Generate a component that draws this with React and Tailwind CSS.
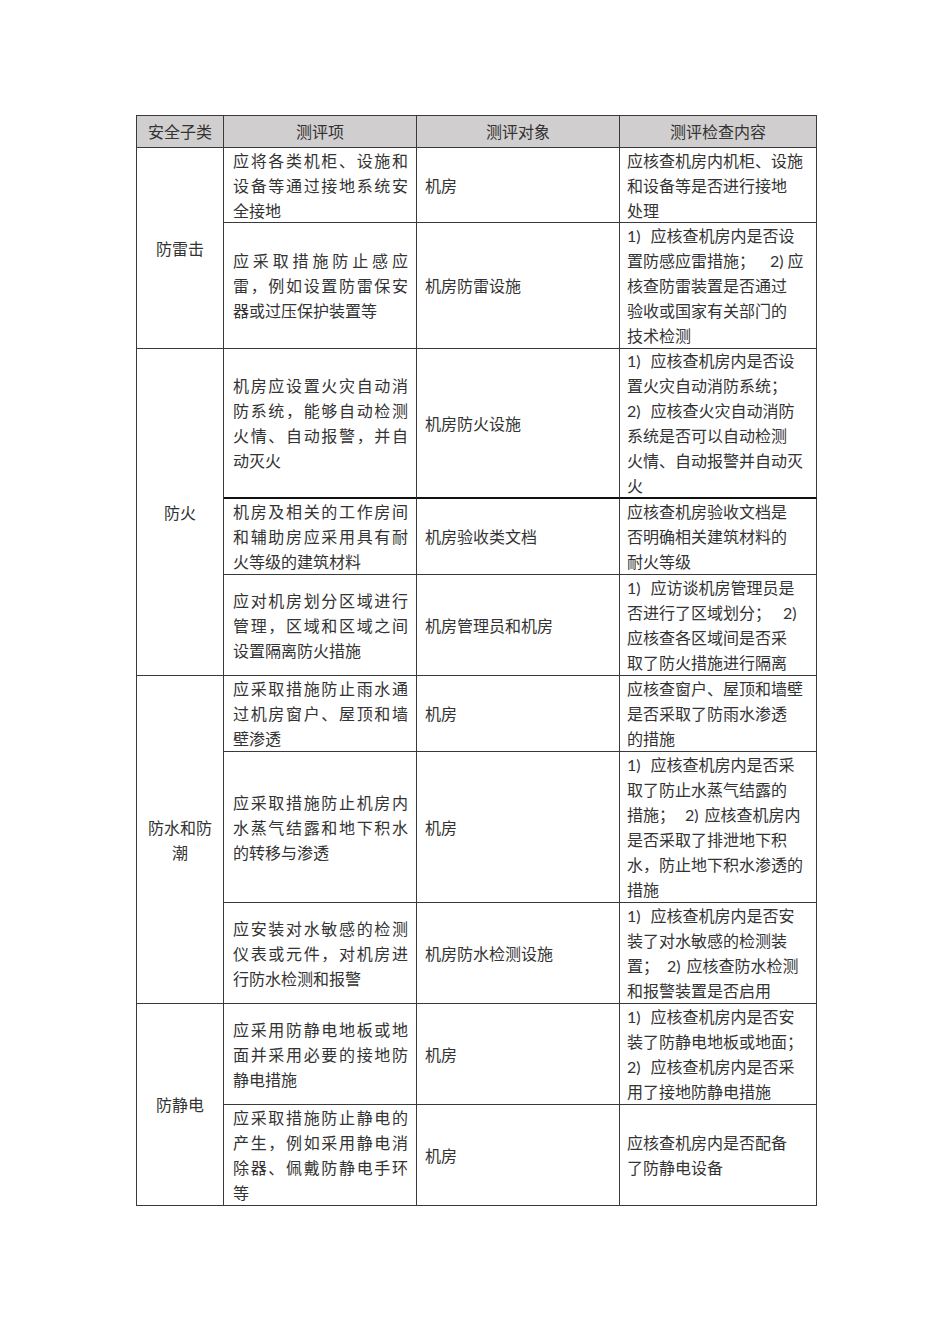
const groups = [
  {
    name: ['防雷击'],
    rows: [
      {
        h: 'h-[75px]',
        item: ['应将各类机柜、设施和', '设备等通过接地系统安', '全接地'],
        obj: '机房',
        check: ['应核查机房内机柜、设施', '和设备等是否进行接地', '处理'],
      },
      {
        h: 'h-[126px]',
        item: ['应采取措施防止感应', '雷，例如设置防雷保安', '器或过压保护装置等'],
        obj: '机房防雷设施',
        check: ['1)~10~应核查机房内是否设', '置防感应雷措施；~15~2)~4~应', '核查防雷装置是否通过', '验收或国家有关部门的', '技术检测'],
      },
    ],
  },
  {
    name: ['防火'],
    rows: [
      {
        h: 'h-[150px]',
        thick: true,
        item: ['机房应设置火灾自动消', '防系统，能够自动检测', '火情、自动报警，并自', '动灭火'],
        obj: '机房防火设施',
        check: ['1)~10~应核查机房内是否设', '置火灾自动消防系统；', '2)~10~应核查火灾自动消防', '系统是否可以自动检测', '火情、自动报警并自动灭', '火'],
      },
      {
        h: 'h-[76px]',
        item: ['机房及相关的工作房间', '和辅助房应采用具有耐', '火等级的建筑材料'],
        obj: '机房验收类文档',
        check: ['应核查机房验收文档是', '否明确相关建筑材料的', '耐火等级'],
      },
      {
        h: 'h-[101px]',
        item: ['应对机房划分区域进行', '管理，区域和区域之间', '设置隔离防火措施'],
        obj: '机房管理员和机房',
        check: ['1)~10~应访谈机房管理员是', '否进行了区域划分；~12~2)', '应核查各区域间是否采', '取了防火措施进行隔离'],
      },
    ],
  },
  {
    name: ['防水和防', '潮'],
    rows: [
      {
        h: 'h-[76px]',
        item: ['应采取措施防止雨水通', '过机房窗户、屋顶和墙', '壁渗透'],
        obj: '机房',
        check: ['应核查窗户、屋顶和墙壁', '是否采取了防雨水渗透', '的措施'],
      },
      {
        h: 'h-[151px]',
        item: ['应采取措施防止机房内', '水蒸气结露和地下积水', '的转移与渗透'],
        obj: '机房',
        check: ['1)~10~应核查机房内是否采', '取了防止水蒸气结露的', '措施；~10~2)~6~应核查机房内', '是否采取了排泄地下积', '水，防止地下积水渗透的', '措施'],
      },
      {
        h: 'h-[101px]',
        item: ['应安装对水敏感的检测', '仪表或元件，对机房进', '行防水检测和报警'],
        obj: '机房防水检测设施',
        check: ['1)~10~应核查机房内是否安', '装了对水敏感的检测装', '置；~8~2)~6~应核查防水检测', '和报警装置是否启用'],
      },
    ],
  },
  {
    name: ['防静电'],
    rows: [
      {
        h: 'h-[101px]',
        item: ['应采用防静电地板或地', '面并采用必要的接地防', '静电措施'],
        obj: '机房',
        check: ['1)~10~应核查机房内是否安', '装了防静电地板或地面；', '2)~10~应核查机房内是否采', '用了接地防静电措施'],
      },
      {
        h: 'h-[101px]',
        item: ['应采取措施防止静电的', '产生，例如采用静电消', '除器、佩戴防静电手环', '等'],
        obj: '机房',
        check: ['应核查机房内是否配备', '了防静电设备'],
      },
    ],
  },
];

const spans = { 2: 'row-span-2', 3: 'row-span-3' };

// "~12~" in a line is a fixed gap, like the wide spaces in the original doc
function Gapped({ text }) {
  const parts = text.split('~');
  return parts.map((p, i) =>
    i % 2 === 1 ? (
      <span key={i} className="inline-block" style={{ width: Number(p) }} />
    ) : (
      <span key={i}>{p}</span>
    )
  );
}

function Cell({ children, className = '', thick }) {
  return (
    <div
      className={`flex flex-col justify-center border-r border-[#3a3a3a] ${
        thick ? 'border-b-2 border-b-[#111]' : 'border-b'
      } ${className}`}
    >
      {children}
    </div>
  );
}

function App() {
  return (
    <div className="min-h-screen bg-white pt-[115px] pl-[136px] text-[16px] leading-[25px] text-[#333] font-['Noto_Sans_CJK_SC',sans-serif]">
      <div className="grid w-[681px] grid-cols-[87px_193px_203px_197px] grid-rows-[32px_75px_126px_150px_76px_101px_76px_151px_101px_101px_101px] border-l border-t border-[#3a3a3a]">
        {['安全子类', '测评项', '测评对象', '测评检查内容'].map((t) => (
          <Cell key={t} className="items-center bg-[#d0cece]">
            {t}
          </Cell>
        ))}

        {groups.map((g) => (
          <>
            <Cell key={g.name[0]} className={`items-center text-center ${spans[g.rows.length]}`}>
              {g.name.map((n) => (
                <div key={n}>{n}</div>
              ))}
            </Cell>
            {g.rows.map((r, ri) => (
              <>
                <Cell key={'i' + ri} thick={r.thick} className="pl-[9px] pr-[8px]">
                  {r.item.map((l, li) => (
                    <div
                      key={li}
                      className={li < r.item.length - 1 ? 'text-justify [text-align-last:justify]' : ''}
                    >
                      {l}
                    </div>
                  ))}
                </Cell>
                <Cell key={'o' + ri} thick={r.thick} className="pl-[8px]">
                  {r.obj}
                </Cell>
                <Cell
                  key={'c' + ri}
                  thick={r.thick}
                  className="pl-[7px] pr-[4px] whitespace-nowrap font-['Lato','Noto_Sans_CJK_SC',sans-serif]"
                >
                  {r.check.map((l, li) => (
                    <div key={li}>
                      <Gapped text={l} />
                    </div>
                  ))}
                </Cell>
              </>
            ))}
          </>
        ))}
      </div>
    </div>
  );
}

export default App;
